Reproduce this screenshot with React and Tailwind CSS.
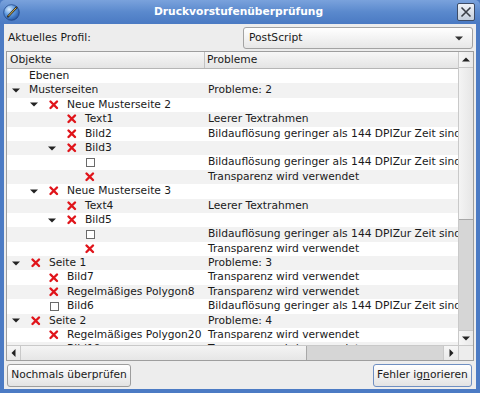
import React from "react";

const B = "Bildauflösung geringer als 144 DPIZur Zeit sind es 72 DPI";
const T = "Transparenz wird verwendet";
const L = "Leerer Textrahmen";

const rows = [
  { l: 0, a: false, i: null, t: "Ebenen", p: "" },
  { l: 0, a: true, i: null, t: "Musterseiten", p: "Probleme: 2" },
  { l: 1, a: true, i: "x", t: "Neue Musterseite 2", p: "" },
  { l: 2, a: false, i: "x", t: "Text1", p: L },
  { l: 2, a: false, i: "x", t: "Bild2", p: B },
  { l: 2, a: true, i: "x", t: "Bild3", p: "" },
  { l: 3, a: false, i: "box", t: "", p: B },
  { l: 3, a: false, i: "x", t: "", p: T },
  { l: 1, a: true, i: "x", t: "Neue Musterseite 3", p: "" },
  { l: 2, a: false, i: "x", t: "Text4", p: L },
  { l: 2, a: true, i: "x", t: "Bild5", p: "" },
  { l: 3, a: false, i: "box", t: "", p: B },
  { l: 3, a: false, i: "x", t: "", p: T },
  { l: 0, a: true, i: "x", t: "Seite 1", p: "Probleme: 3" },
  { l: 1, a: false, i: "x", t: "Bild7", p: T },
  { l: 1, a: false, i: "x", t: "Regelmäßiges Polygon8", p: T },
  { l: 1, a: false, i: "box", t: "Bild6", p: B },
  { l: 0, a: true, i: "x", t: "Seite 2", p: "Probleme: 4" },
  { l: 1, a: false, i: "x", t: "Regelmäßiges Polygon20", p: T },
  { l: 1, a: false, i: "x", t: "Bild19", p: T },
];

const indents = ["w-0", "w-[18px]", "w-[36px]", "w-[54px]"];

function Down({ c = "#222" }) {
  return (
    <svg width="8" height="5" viewBox="0 0 8 5">
      <path d="M0 0.5 L8 0.5 L4 4.5 Z" fill={c} />
    </svg>
  );
}
function Up() {
  return (
    <svg width="8" height="5" viewBox="0 0 8 5">
      <path d="M0 4.5 L8 4.5 L4 0.5 Z" fill="#222" />
    </svg>
  );
}
function Left() {
  return (
    <svg width="5" height="8" viewBox="0 0 5 8">
      <path d="M4.5 0 L4.5 8 L0.5 4 Z" fill="#222" />
    </svg>
  );
}
function Right() {
  return (
    <svg width="5" height="8" viewBox="0 0 5 8">
      <path d="M0.5 0 L0.5 8 L4.5 4 Z" fill="#222" />
    </svg>
  );
}

function RedX() {
  return (
    <svg width="14" height="14" viewBox="0 0 14 14">
      <path d="M3.5 3.5 L10 10 M10 3.5 L3.5 10" stroke="#e0141a" strokeWidth="2.4" strokeLinecap="round" />
    </svg>
  );
}

function Box() {
  return (
    <div className="w-[14px] h-[14px] flex items-center justify-center">
      <div className="w-[9px] h-[9px] border border-[#6a6a6a] bg-white" />
    </div>
  );
}

function Row({ r, idx }) {
  return (
    <div className={`flex h-[14.4px] leading-[14.4px] whitespace-nowrap ${idx % 2 ? "bg-[#f2f2f2]" : "bg-white"}`}>
      <div className="w-[198px] shrink-0 flex items-center overflow-hidden">
        <div className={`${indents[r.l]} shrink-0`} />
        <div className="w-[18px] shrink-0 flex items-center justify-center">{r.a ? <Down /> : null}</div>
        <div className="ml-[4px] flex items-center">
          {r.i === "x" ? <RedX /> : r.i === "box" ? <Box /> : null}
          {r.t ? <span className={r.i ? "ml-[6px]" : ""}>{r.t}</span> : null}
        </div>
      </div>
      <div className="pl-[3px] flex-1">{r.p}</div>
    </div>
  );
}

export default function App() {
  return (
    <div
      className="w-[480px] h-[393px] flex flex-col bg-[#4c7bc4] text-[10.7px] text-[#1a1a1a] overflow-hidden"
      style={{ fontFamily: '"DejaVu Sans", Verdana, sans-serif' }}
    >
      {/* Title bar */}
      <div className="h-[24px] shrink-0 flex items-center px-[3px] bg-gradient-to-b from-[#7aa2dc] via-[#5a89cd] to-[#4a7ac3] rounded-t-[5px]">
        <svg width="17" height="17" viewBox="0 0 17 17" className="shrink-0">
          <defs>
            <radialGradient id="g1" cx="0.35" cy="0.3" r="0.8">
              <stop offset="0" stopColor="#d9ecff" />
              <stop offset="0.45" stopColor="#5f9ae0" />
              <stop offset="1" stopColor="#1c4b9a" />
            </radialGradient>
          </defs>
          <circle cx="8.5" cy="8.5" r="7.8" fill="url(#g1)" stroke="#1b3f80" strokeWidth="0.7" />
          <path d="M5 12.5 L13.5 3.5" stroke="#2b2b2b" strokeWidth="2.2" strokeLinecap="round" />
          <path d="M5.6 11.9 L13 4" stroke="#f2c94c" strokeWidth="0.9" strokeLinecap="round" />
        </svg>
        <div className="flex-1 text-center text-white font-bold">Druckvorstufenüberprüfung</div>
        <div className="w-[18px] h-[18px] shrink-0 mr-[2px] rounded-[2px] border border-[#3d4c66] bg-gradient-to-b from-[#eef2f8] to-[#c3cedc] flex items-center justify-center">
          <svg width="12" height="12" viewBox="0 0 12 12">
            <path d="M1.5 1.5 L10.5 10.5 M10.5 1.5 L1.5 10.5" stroke="#3a3f47" strokeWidth="1.6" />
          </svg>
        </div>
      </div>

      {/* Body */}
      <div className="flex-1 flex flex-col mx-[4px] mb-[4px] bg-[#ededed] px-[2px] pt-[3px]">
        {/* Profile row */}
        <div className="flex items-center h-[22px]">
          <div className="flex-1 pl-[2px]">Aktuelles Profil:</div>
          <div className="w-[230px] h-[22px] mr-[1px] rounded-[3px] border border-[#a3a3a3] bg-gradient-to-b from-white to-[#e7e7e7] flex items-center pl-[5px] pr-[9px]">
            <span className="flex-1">PostScript</span>
            <Down c="#333" />
          </div>
        </div>

        {/* Tree */}
        <div className="mt-[2px] h-[310px] border border-[#9e9e9e] bg-white flex flex-col">
          <div className="flex flex-1 min-h-0">
            <div className="flex-1 min-w-0 overflow-hidden flex flex-col">
              <div className="h-[17px] shrink-0 flex leading-[16px] whitespace-nowrap bg-gradient-to-b from-[#f7f7f7] to-[#e4e4e4] border-b border-[#b5b5b5]">
                <div className="w-[198px] shrink-0 pl-[3px] border-r border-[#c2c2c2]">Objekte</div>
                <div className="flex-1 pl-[2px]">Probleme</div>
              </div>
              <div className="flex-1 overflow-hidden">
                {rows.map((r, i) => (
                  <Row key={i} r={r} idx={i} />
                ))}
              </div>
            </div>
            {/* vertical scrollbar */}
            <div className="w-[15px] shrink-0 flex flex-col border-l border-[#c9c9c9] bg-[#dcdcdc]">
              <div className="h-[16px] shrink-0 flex items-center justify-center bg-gradient-to-r from-[#f6f6f6] to-[#e9e9e9] border-b border-[#c9c9c9]">
                <Up />
              </div>
              <div className="h-[152px] shrink-0 bg-gradient-to-r from-[#f4f4f4] to-[#e6e6e6] border-b border-[#a8a8a8]" />
              <div className="flex-1 bg-[#d6d6d6]" />
              <div className="h-[15px] shrink-0 flex items-center justify-center bg-gradient-to-r from-[#f6f6f6] to-[#e9e9e9] border-t border-[#c9c9c9]">
                <Down />
              </div>
            </div>
          </div>
          {/* horizontal scrollbar */}
          <div className="h-[15px] shrink-0 flex border-t border-[#c9c9c9]">
            <div className="w-[14px] shrink-0 flex items-center justify-center bg-gradient-to-b from-[#f6f6f6] to-[#e9e9e9] border-r border-[#c9c9c9]">
              <Left />
            </div>
            <div className="w-[286px] shrink-0 bg-gradient-to-b from-[#f4f4f4] to-[#e6e6e6] border-r border-[#a8a8a8]" />
            <div className="flex-1 bg-[#d6d6d6]" />
            <div className="w-[15px] shrink-0 flex items-center justify-center bg-gradient-to-b from-[#f6f6f6] to-[#e9e9e9] border-l border-[#c9c9c9]">
              <Right />
            </div>
            <div className="w-[15px] shrink-0 bg-[#ededed] border-l border-[#c9c9c9]" />
          </div>
        </div>

        {/* Buttons */}
        <div className="mt-[3px] flex justify-between">
          <div className="ml-[1px] h-[23px] w-[124px] rounded-[3px] border border-[#9d9d9d] bg-gradient-to-b from-white to-[#e3e3e3] flex items-center justify-center">
            Nochmals überprüfen
          </div>
          <div className="mr-[2px] h-[23px] w-[99px] rounded-[3px] border border-[#6f8fc2] bg-gradient-to-b from-white to-[#e3e3e3] flex items-center justify-center">
            <span>
              Fehler ig<span className="underline">n</span>orieren
            </span>
          </div>
        </div>
      </div>
    </div>
  );
}
